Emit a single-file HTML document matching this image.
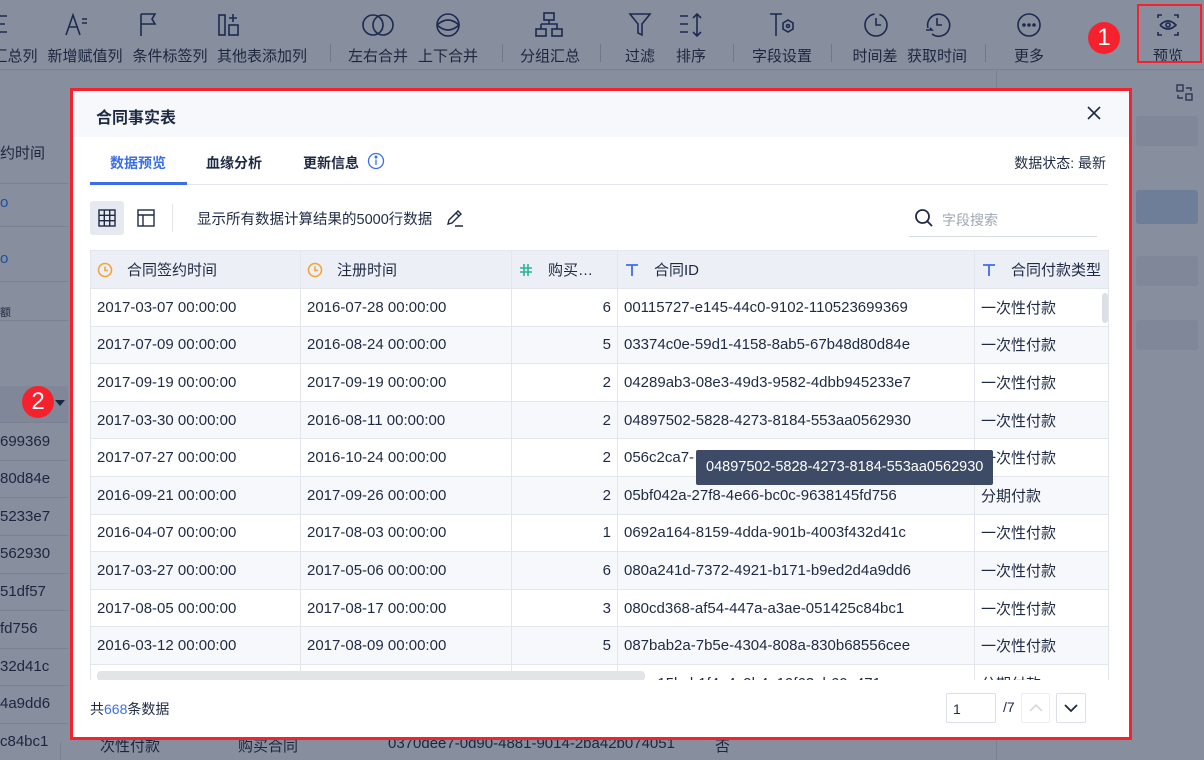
<!DOCTYPE html>
<html><head><meta charset="utf-8"><style>
*{box-sizing:border-box;margin:0;padding:0}
body{width:1204px;height:760px;overflow:hidden;background:#878e9d;font-family:"Liberation Sans","Noto Sans CJK SC",sans-serif;position:relative;color:#1e2a44}
.tb{position:absolute;top:45px;font-size:15px;color:#1c2640;white-space:nowrap;transform:translateX(-50%)}
.sep{position:absolute;top:44px;width:1px;height:18px;background:#6f7788}
.abs{position:absolute}
.bgrow{position:absolute;left:0;width:68px;height:1px;background:#7a8292}
.bgt{position:absolute;left:0;font-size:15px;color:#1c2640;white-space:nowrap}
.modal{position:absolute;left:70px;top:88px;width:1062px;height:652px;background:#fff;border:3px solid #f5222d;overflow:hidden}
.mh{height:46px;background:#f7f8fb;padding:13px 0 0 23px;font-size:16px;font-weight:bold;color:#1e2a44}
table{border-collapse:collapse;position:absolute;left:17px;top:159px;table-layout:fixed;font-size:15px}
td,th{border:1px solid #e3e6ec;height:37.6px;padding:0 6px;white-space:nowrap;overflow:hidden;color:#1e2a44;font-weight:normal;text-align:left}
th{background:#eceff5;height:38px}
tr.e td{background:#f7f8fb}
td.n{text-align:right}
.hi{display:inline-block;width:16px;margin-right:14px;vertical-align:-3px}
</style></head><body>
<svg class="abs" style="left:0;top:8px" width="1204" height="30" stroke="#1c2a52" fill="none" stroke-width="1.6">
<path d="M0 8h7M0 16h5M0 24h7"/>
<path d="M66 27l7-20 7 20M69 19h9M82 11h5M82 15h5"/>
<path d="M141 6v22M141 6h14l-3 5 3 5h-14"/>
<rect x="219" y="7" width="6" height="20"/><rect x="229" y="17" width="9" height="10"/><path d="M233 6v8M229 10h8"/>
<circle cx="373" cy="17" r="10"/><circle cx="383" cy="17" r="10"/>
<circle cx="448" cy="17" r="11"/><path d="M437 17q11-10 22 0q-11 10-22 0"/>
<rect x="544" y="5" width="10" height="7"/><rect x="536" y="21" width="10" height="7"/><rect x="552" y="21" width="10" height="7"/><path d="M549 12v4M541 16h16v5M541 16v5"/>
<path d="M630 6h20l-8 10v11l-4-2v-9z"/>
<path d="M680 8h8M680 16h8M680 24h8M697 6v22M693 10l4-4 4 4M693 24l4 4 4-4"/>
<path d="M770 6h12M776 6v22"/><path d="M783 15l5-3 5 3v6l-5 3-5-3z"/><circle cx="788" cy="18" r="1.5"/>
<circle cx="876" cy="17" r="11" stroke-dasharray="50 5"/><path d="M876 10v7h5"/>
<path d="M928 20a11 11 0 1 1 4 6"/><path d="M937 10v7h5M926 22h6l-2-2"/>
<circle cx="1029" cy="17" r="11"/><circle cx="1024" cy="17" r="1" fill="#1c2a52"/><circle cx="1029" cy="17" r="1" fill="#1c2a52"/><circle cx="1034" cy="17" r="1" fill="#1c2a52"/>
<path d="M1158 10v-3h4M1174 7h4v3M1178 24v3h-4M1162 27h-4v-3M1160 17q8-8 16 0q-8 8-16 0"/><circle cx="1168" cy="17" r="2"/>
</svg>
<div class="tb" style="left:15px">汇总列</div>
<div class="tb" style="left:85px">新增赋值列</div>
<div class="tb" style="left:170px">条件标签列</div>
<div class="tb" style="left:262px">其他表添加列</div>
<div class="sep" style="left:330px"></div>
<div class="tb" style="left:378px">左右合并</div>
<div class="tb" style="left:448px">上下合并</div>
<div class="sep" style="left:502px"></div>
<div class="tb" style="left:550px">分组汇总</div>
<div class="sep" style="left:600px"></div>
<div class="tb" style="left:640px">过滤</div>
<div class="tb" style="left:691px">排序</div>
<div class="sep" style="left:733px"></div>
<div class="tb" style="left:782px">字段设置</div>
<div class="sep" style="left:831px"></div>
<div class="tb" style="left:875px">时间差</div>
<div class="tb" style="left:937px">获取时间</div>
<div class="sep" style="left:985px"></div>
<div class="tb" style="left:1029px">更多</div>
<div class="tb" style="left:1168px">预览</div>
<div class="abs" style="left:0;top:69px;width:1204px;height:1px;background:#7a8292"></div>
<div class="abs" style="left:1137px;top:4px;width:65px;height:59px;border:2px solid #f5222d"></div>
<div class="abs" style="left:1088px;top:22px;width:32px;height:32px;border-radius:50%;background:#f5222d;color:#fff;font-size:24px;text-align:center;line-height:32px">1</div>
<div class="abs" style="left:996px;top:70px;width:1px;height:690px;background:#7a8292"></div>
<svg class="abs" style="left:1176px;top:84px" width="18" height="18" stroke="#2a3552" fill="none" stroke-width="1.4"><rect x="1" y="1" width="6" height="6"/><rect x="10" y="10" width="6" height="6"/><path d="M10 4h5v3M7 14H2v-3"/></svg>
<div class="abs" style="left:1136px;top:116px;width:62px;height:30px;background:#7f8799;border-radius:3px"></div>
<div class="abs" style="left:1136px;top:190px;width:62px;height:34px;background:#6e7d98;border-radius:3px"></div>
<div class="abs" style="left:1136px;top:256px;width:62px;height:30px;background:#7f8799;border-radius:3px"></div>
<div class="abs" style="left:1136px;top:320px;width:62px;height:30px;background:#7f8799;border-radius:3px"></div>
<div class="bgt" style="top:142px">约时间</div>
<div class="bgrow" style="top:183px"></div>
<div class="bgt" style="top:194px;color:#1f4fa0">o</div>
<div class="bgrow" style="top:226px"></div>
<div class="bgt" style="top:250px;color:#1f4fa0">o</div>
<div class="bgrow" style="top:281px"></div>
<div class="bgt" style="top:304px;font-size:11px">额</div>
<div class="bgrow" style="top:320px"></div>
<div class="abs" style="left:0;top:386px;width:68px;height:36px;background:#7f8798"></div>
<div class="abs" style="left:22px;top:386px;width:32px;height:32px;border-radius:50%;background:#f5222d;color:#fff;font-size:24px;text-align:center;line-height:32px">2</div>
<div class="abs" style="left:55px;top:400px;border:5px solid transparent;border-top:6px solid #1c2640"></div>
<div class="bgrow" style="top:422px"></div>
<div class="bgt" style="top:433px">699369</div><div class="bgrow" style="top:460px"></div>
<div class="bgt" style="top:470px">80d84e</div><div class="bgrow" style="top:497px"></div>
<div class="bgt" style="top:508px">5233e7</div><div class="bgrow" style="top:535px"></div>
<div class="bgt" style="top:545px">562930</div><div class="bgrow" style="top:573px"></div>
<div class="bgt" style="top:583px">51df57</div><div class="bgrow" style="top:610px"></div>
<div class="bgt" style="top:620px">fd756</div><div class="bgrow" style="top:648px"></div>
<div class="bgt" style="top:658px">32d41c</div><div class="bgrow" style="top:685px"></div>
<div class="bgt" style="top:695px">4a9dd6</div><div class="bgrow" style="top:723px"></div>
<div class="bgt" style="top:733px">c84bc1</div>
<div class="abs" style="left:60px;top:742px;width:1px;height:18px;background:#7a8292"></div>
<div class="bgt" style="left:100px;top:735px">次性付款</div>
<div class="bgt" style="left:238px;top:735px">购买合同</div>
<div class="bgt" style="left:388px;top:735px">0370dee7-0d90-4881-9014-2ba42b074051</div>
<div class="bgt" style="left:715px;top:735px">否</div>
<div class="modal">
<div class="mh">合同事实表</div>
<svg class="abs" style="left:1014px;top:15px" width="14" height="14" stroke="#1e2a44" stroke-width="1.6"><path d="M1 1l12 12M13 1L1 13"/></svg>
<div class="abs" style="left:37px;top:62px;font-size:14px;font-weight:bold;color:#3a6ee8">数据预览</div>
<div class="abs" style="left:133px;top:62px;font-size:14px;font-weight:bold">血缘分析</div>
<div class="abs" style="left:230px;top:62px;font-size:14px;font-weight:bold">更新信息</div>
<svg class="abs" style="left:294px;top:61px" width="18" height="18" stroke="#3a6ee8" fill="none" stroke-width="1.3"><circle cx="9" cy="9" r="7.5"/><path d="M9 7.5v5.5"/><circle cx="9" cy="5" r=".8" fill="#3a6ee8"/></svg>
<div class="abs" style="right:23px;top:62px;font-size:14px">数据状态: 最新</div>
<div class="abs" style="left:17px;top:93px;width:1018px;height:1px;background:#e3e6ec"></div>
<div class="abs" style="left:17px;top:91px;width:97px;height:3px;background:#3a6ee8"></div>
<div class="abs" style="left:17px;top:110px;width:34px;height:34px;background:#e6e9ef;border-radius:3px"></div>
<svg class="abs" style="left:25px;top:118px" width="18" height="18" stroke="#1e2a44" fill="none" stroke-width="1.4"><rect x="1" y="1" width="16" height="16"/><path d="M6.3 1v16M11.7 1v16M1 6.3h16M1 11.7h16"/></svg>
<svg class="abs" style="left:64px;top:118px" width="18" height="18" stroke="#1e2a44" fill="none" stroke-width="1.4"><rect x="1" y="1" width="16" height="16"/><path d="M1 6h16M6 6v11"/></svg>
<div class="abs" style="left:99px;top:113px;width:1px;height:28px;background:#e3e6ec"></div>
<div class="abs" style="left:124px;top:117px;font-size:14.5px">显示所有数据计算结果的5000行数据</div>
<svg class="abs" style="left:372px;top:117px" width="20" height="20" stroke="#1e2a44" fill="none" stroke-width="1.4"><path d="M3 16l1-4 9-9 3 3-9 9zM11 5l3 3M10 18h8"/></svg>
<svg class="abs" style="left:841px;top:117px" width="20" height="20" stroke="#1e2a44" fill="none" stroke-width="1.8"><circle cx="8.5" cy="8.5" r="6.5"/><path d="M13 13l5 5"/></svg>
<div class="abs" style="left:869px;top:119px;font-size:14px;color:#a0a6b3">字段搜索</div>
<div class="abs" style="left:836px;top:145px;width:188px;height:1px;background:#d6dae2"></div>
<table>
<colgroup><col style="width:210px"><col style="width:211px"><col style="width:106px"><col style="width:357px"><col style="width:134px"></colgroup>
<tr><th><svg class="hi" width="16" height="16" stroke="#f0a63a" fill="none" stroke-width="1.6"><circle cx="8" cy="8" r="6.5"/><path d="M8 4.5v4h3"/></svg>合同签约时间</th><th><svg class="hi" width="16" height="16" stroke="#f0a63a" fill="none" stroke-width="1.6"><circle cx="8" cy="8" r="6.5"/><path d="M8 4.5v4h3"/></svg>注册时间</th><th><svg class="hi" width="16" height="16" stroke="#2bb39a" fill="none" stroke-width="1.6"><path d="M6 2v12M10 2v12M2 6h12M2 10h12"/></svg>购买…</th><th><svg class="hi" width="16" height="16" stroke="#3a6ee8" fill="none" stroke-width="1.8"><path d="M2 3h12M8 3v11"/></svg>合同ID</th><th><svg class="hi" width="16" height="16" stroke="#3a6ee8" fill="none" stroke-width="1.8"><path d="M2 3h12M8 3v11"/></svg>合同付款类型</th></tr>
<tr><td>2017-03-07 00:00:00</td><td>2016-07-28 00:00:00</td><td class="n">6</td><td>00115727-e145-44c0-9102-110523699369</td><td>一次性付款</td></tr>
<tr class="e"><td>2017-07-09 00:00:00</td><td>2016-08-24 00:00:00</td><td class="n">5</td><td>03374c0e-59d1-4158-8ab5-67b48d80d84e</td><td>一次性付款</td></tr>
<tr><td>2017-09-19 00:00:00</td><td>2017-09-19 00:00:00</td><td class="n">2</td><td>04289ab3-08e3-49d3-9582-4dbb945233e7</td><td>一次性付款</td></tr>
<tr class="e"><td>2017-03-30 00:00:00</td><td>2016-08-11 00:00:00</td><td class="n">2</td><td>04897502-5828-4273-8184-553aa0562930</td><td>一次性付款</td></tr>
<tr><td>2017-07-27 00:00:00</td><td>2016-10-24 00:00:00</td><td class="n">2</td><td>056c2ca7-</td><td>一次性付款</td></tr>
<tr class="e"><td>2016-09-21 00:00:00</td><td>2017-09-26 00:00:00</td><td class="n">2</td><td>05bf042a-27f8-4e66-bc0c-9638145fd756</td><td>分期付款</td></tr>
<tr><td>2016-04-07 00:00:00</td><td>2017-08-03 00:00:00</td><td class="n">1</td><td>0692a164-8159-4dda-901b-4003f432d41c</td><td>一次性付款</td></tr>
<tr class="e"><td>2017-03-27 00:00:00</td><td>2017-05-06 00:00:00</td><td class="n">6</td><td>080a241d-7372-4921-b171-b9ed2d4a9dd6</td><td>一次性付款</td></tr>
<tr><td>2017-08-05 00:00:00</td><td>2017-08-17 00:00:00</td><td class="n">3</td><td>080cd368-af54-447a-a3ae-051425c84bc1</td><td>一次性付款</td></tr>
<tr class="e"><td>2016-03-12 00:00:00</td><td>2017-08-09 00:00:00</td><td class="n">5</td><td>087bab2a-7b5e-4304-808a-830b68556cee</td><td>一次性付款</td></tr>
<tr><td>2017-05-18 00:00:00</td><td>2016-09-25 00:00:00</td><td class="n">5</td><td>09ae15bcb1f4a4c9b4a19f63ab60e471</td><td>分期付款</td></tr>
</table>
<div class="abs" style="left:1029px;top:202px;width:6px;height:30px;background:#dcdfe5;border-radius:3px"></div>
<div class="abs" style="left:24px;top:580px;width:548px;height:10px;background:#e2e4e8;border-radius:4px"></div>
<div class="abs" style="left:0;top:589px;width:1060px;height:70px;background:#fff"></div>
<div class="abs" style="left:17px;top:608px;font-size:14px">共<span style="color:#3a6ee8">668</span>条数据</div>
<div class="abs" style="left:873px;top:602px;width:50px;height:30px;border:1px solid #dcdfe5;border-radius:2px;font-size:14px;padding:7px 6px">1</div>
<div class="abs" style="left:930px;top:608px;font-size:14px">/7</div>
<div class="abs" style="left:948px;top:602px;width:29px;height:30px;border:1px solid #eceef2;border-radius:2px"></div>
<svg class="abs" style="left:955px;top:611px" width="16" height="12" stroke="#d0d4db" fill="none" stroke-width="1.5"><path d="M2 9l6-6 6 6"/></svg>
<div class="abs" style="left:983px;top:602px;width:30px;height:30px;border:1px solid #dcdfe5;border-radius:2px"></div>
<svg class="abs" style="left:990px;top:611px" width="16" height="12" stroke="#1e2a44" fill="none" stroke-width="1.8"><path d="M2 3l6 6 6-6"/></svg>
<div class="abs" style="left:623px;top:359px;height:35px;background:#3d4b66;border-radius:2px;color:#fff;font-size:14.5px;padding:9px 10px;white-space:nowrap">04897502-5828-4273-8184-553aa0562930</div>
</div>
</body></html>
